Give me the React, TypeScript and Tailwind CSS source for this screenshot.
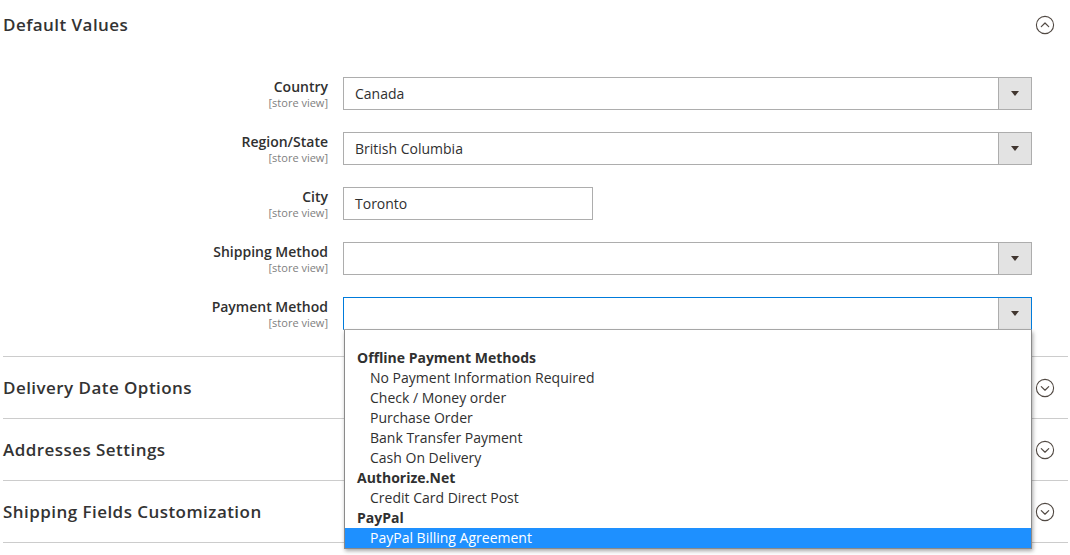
import React from 'react';

const FONT = { fontFamily: '"Open Sans", "Noto Sans", sans-serif' };

function CircleChevron({ up }: { up?: boolean }) {
  return (
    <svg width="20" height="20" viewBox="0 0 20 20" fill="none">
      <circle cx="10" cy="10" r="8.6" stroke="#514943" strokeWidth="1.1" />
      {up ? (
        <path d="M6.3 11.6 L10 8 L13.7 11.6" stroke="#514943" strokeWidth="1.2" strokeLinecap="round" strokeLinejoin="round" />
      ) : (
        <path d="M6.3 8.6 L10 12.2 L13.7 8.6" stroke="#514943" strokeWidth="1.2" strokeLinecap="round" strokeLinejoin="round" />
      )}
    </svg>
  );
}

function Arrow() {
  return (
    <div className="flex h-full w-[33px] shrink-0 items-center justify-center border-l border-[#adadad] bg-[#e3e3e3]">
      <div className="h-0 w-0 border-x-[4px] border-t-[5px] border-x-transparent border-t-[#41362f]" />
    </div>
  );
}

function Field({ label, children }: { label: string; children: React.ReactNode }) {
  return (
    <div className="flex items-start">
      <div className="w-[328px] shrink-0 text-right">
        <div className="text-[14px] font-semibold leading-[19px] text-[#303030]">{label}</div>
        <div className="text-[11px] leading-[13px] text-[#808080]">[store view]</div>
      </div>
      <div className="ml-[15px]">{children}</div>
    </div>
  );
}

function Select({ value, active }: { value?: string; active?: boolean }) {
  return (
    <div
      className={`flex h-[33px] w-[689px] items-center border bg-white ${
        active ? 'border-[#007bdb] border-b-[#adadad]' : 'border-[#adadad]'
      }`}
    >
      <div className="flex-1 pl-[11px] text-[14px] text-[#303030]">{value}</div>
      <Arrow />
    </div>
  );
}

const options: { text: string; group?: boolean; selected?: boolean }[] = [
  { text: 'Offline Payment Methods', group: true },
  { text: 'No Payment Information Required' },
  { text: 'Check / Money order' },
  { text: 'Purchase Order' },
  { text: 'Bank Transfer Payment' },
  { text: 'Cash On Delivery' },
  { text: 'Authorize.Net', group: true },
  { text: 'Credit Card Direct Post' },
  { text: 'PayPal', group: true },
  { text: 'PayPal Billing Agreement', selected: true },
];

export default function App() {
  return (
    <div className="relative h-[555px] w-[1070px] overflow-hidden bg-white" style={FONT}>
      <div className="flex h-[50px] items-center justify-between pl-[3px] pr-[15px]">
        <h2 className="text-[17px] font-semibold tracking-[0.45px] text-[#333333]">Default Values</h2>
        <CircleChevron up />
      </div>

      <div className="flex flex-col gap-[22px] pt-[27px]">
        <Field label="Country">
          <Select value="Canada" />
        </Field>
        <Field label="Region/State">
          <Select value="British Columbia" />
        </Field>
        <Field label="City">
          <div className="flex h-[33px] w-[250px] items-center border border-[#adadad] pl-[11px] text-[14px] text-[#303030]">
            Toronto
          </div>
        </Field>
        <Field label="Shipping Method">
          <Select />
        </Field>
        <Field label="Payment Method">
          <Select active />
        </Field>
      </div>

      <div className="ml-[3px] mr-[2px] mt-[26px] border-b border-[#cccccc]">
        {['Delivery Date Options', 'Addresses Settings', 'Shipping Fields Customization'].map((t) => (
          <div key={t} className="flex h-[62px] items-center justify-between border-t border-[#cccccc] pr-[13px]">
            <span className="text-[17px] font-semibold tracking-[0.45px] text-[#333333]">{t}</span>
            <CircleChevron />
          </div>
        ))}
      </div>

      <div className="absolute left-[344px] top-[330px] w-[688px] border border-t-0 border-[#8a8a8a] bg-white pt-[18px] shadow-[1px_2px_4px_rgba(0,0,0,0.35)]">
        {options.map((o) => (
          <div
            key={o.text}
            className={`h-[20px] text-[14px] leading-[20px] ${
              o.group
                ? 'pl-[12px] font-bold text-[#303030]'
                : o.selected
                  ? 'bg-[#1e90ff] pl-[25px] text-white'
                  : 'pl-[25px] text-[#303030]'
            }`}
          >
            {o.text}
          </div>
        ))}
      </div>
    </div>
  );
}
